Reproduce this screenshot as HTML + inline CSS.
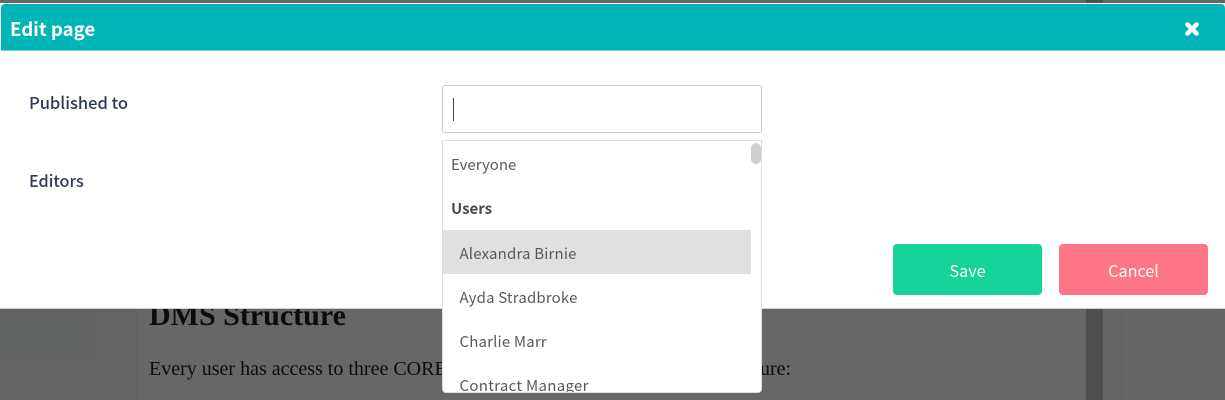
<!DOCTYPE html>
<html>
<head>
<meta charset="utf-8">
<style>
html,body{margin:0;padding:0;width:1225px;height:400px;overflow:hidden;background:#666;}
body{position:relative;font-family:"Noto Sans CJK JP","Liberation Sans",sans-serif;}
.a{position:absolute;white-space:nowrap;line-height:20px;}
.s{position:absolute;}
.serif{font-family:"Liberation Serif",serif;color:#0c0c0c;}
.item{position:absolute;left:16.5px;font-size:15px;letter-spacing:.17px;color:#5a5a5a;line-height:20px;white-space:nowrap;}
</style>
</head>
<body>
<!-- backdrop -->
<div class="s" style="left:0;top:0;width:1225px;height:3px;background:#666"></div>
<div class="s" style="left:1086px;top:0;width:17px;height:3px;background:#4f4f4f"></div>
<div class="s" style="left:0;top:308px;width:139px;height:92px;background:#636363"></div>
<div class="s" style="left:0;top:308px;width:92px;height:50px;background:#616262"></div>
<div class="s" style="left:139px;top:308px;width:947px;height:92px;background:#676767"></div>
<div class="s" style="left:1086px;top:308px;width:17px;height:92px;background:#4f4f4f"></div>
<div class="s" style="left:1103px;top:308px;width:21px;height:92px;background:#646464"></div>
<div class="a serif" style="left:149px;top:299px;font-size:30px;font-weight:bold;line-height:34px">DMS Structure</div>
<div class="a serif" style="left:149px;top:359px;font-size:20px;">Every user has access to three CORE</div>
<div class="a serif" style="left:760px;top:359px;font-size:20px;">ure:</div>

<!-- modal -->
<div class="s" style="left:0;top:3px;width:1225px;height:306px;background:#fff;border-bottom:0;"></div>
<div class="s" style="left:0;top:308px;width:1225px;height:1px;background:#d0d0d0"></div>
<div class="s" style="left:1px;top:4px;width:1224px;height:46px;background:#00b5b8;border-radius:4px 4px 0 0;"></div>
<div class="s" style="left:1px;top:50px;width:1224px;height:1px;background:#7ddcb0"></div>
<div class="a" style="left:10px;top:17px;font-size:18.6px;font-weight:700;color:#fff;line-height:24px">Edit page</div>
<svg class="s" style="left:1184px;top:21px" width="16" height="16" viewBox="0 0 16 16"><path d="M3.4 3.4L12.6 12.6M12.6 3.4L3.4 12.6" stroke="#fff" stroke-width="4.4" stroke-linecap="round" fill="none"/></svg>

<div class="a" style="left:29px;top:92px;font-size:16.5px;font-weight:500;color:#2f3a55">Published to</div>
<div class="a" style="left:29px;top:170px;font-size:16.2px;font-weight:500;color:#2f3a55">Editors</div>

<!-- input -->
<div class="s" style="left:442px;top:85px;width:318px;height:46px;border:1px solid #cbcbcb;border-radius:3px;background:#fff"></div>
<div class="s" style="left:453px;top:98px;width:1px;height:23px;background:#444"></div>

<!-- dropdown -->
<div class="s" style="left:442px;top:140px;width:318px;height:251px;border:1px solid #dcdce6;border-radius:0 0 4px 4px;background:#fff;overflow:hidden">
  <div class="s" style="left:0;top:89px;width:308px;height:44px;background:#e0e0e0"></div>
  <div class="s" style="left:308px;top:2px;width:10px;height:21px;background:#cfcfcf;border-radius:5px"></div>
  <div class="item" style="left:8px;top:14px;letter-spacing:0">Everyone</div>
  <div class="item" style="left:8px;top:58px;font-weight:700;color:#4a4a4a;letter-spacing:0">Users</div>
  <div class="item" style="top:103px">Alexandra Birnie</div>
  <div class="item" style="top:147px">Ayda Stradbroke</div>
  <div class="item" style="top:191px">Charlie Marr</div>
  <div class="item" style="top:235px;letter-spacing:.3px">Contract Manager</div>
</div>

<!-- buttons -->
<div class="s" style="left:893px;top:244px;width:149px;height:51px;background:#16d39a;border-radius:4px;color:#fff;font-size:16.2px;line-height:53px;text-align:center">Save</div>
<div class="s" style="left:1059px;top:244px;width:149px;height:51px;background:#ff7588;border-radius:4px;color:#fff;font-size:16.2px;line-height:53px;text-align:center">Cancel</div>
</body>
</html>
